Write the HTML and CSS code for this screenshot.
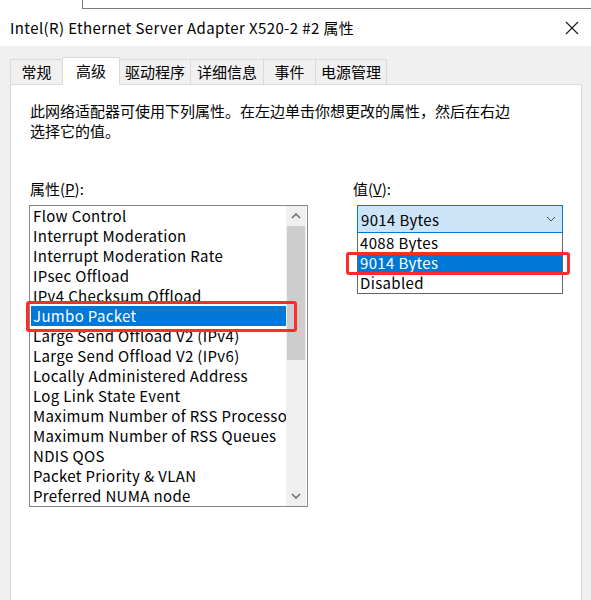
FILE: index.html
```html
<!DOCTYPE html>
<html lang="zh-CN">
<head>
    <meta charset="UTF-8">
    <title>Intel(R) Ethernet Server Adapter X520-2 #2 属性</title>
    <link rel="stylesheet" href="styles.css">
</head>
<body>
    <div class="behind">
        <div class="behind-left"></div>
        <div class="behind-right"></div>
    </div>

    <div class="titlebar">
        <span class="title">Intel(R) Ethernet Server Adapter X520-2 #2 属性</span>
        <svg class="close" width="14" height="14" viewBox="0 0 14 14">
            <path d="M1 1 L13 13 M13 1 L1 13" stroke="#1a1a1a" stroke-width="1.1" fill="none"/>
        </svg>
    </div>

    <div class="dialog">
        <div class="tabs">
            <div class="tab">常规</div>
            <div class="tab active">高级</div>
            <div class="tab">驱动程序</div>
            <div class="tab">详细信息</div>
            <div class="tab">事件</div>
            <div class="tab">电源管理</div>
        </div>

        <div class="panel">
            <p class="intro">此网络适配器可使用下列属性。在左边单击你想更改的属性，然后在右边<br>选择它的值。</p>

            <div class="columns">
                <div class="col-left">
                    <div class="label">属性(<u>P</u>):</div>
                    <div class="listbox">
                        <div class="items">
                            <div class="item">Flow Control</div>
                            <div class="item">Interrupt Moderation</div>
                            <div class="item">Interrupt Moderation Rate</div>
                            <div class="item">IPsec Offload</div>
                            <div class="item">IPv4 Checksum Offload</div>
                            <div class="item selected">Jumbo Packet</div>
                            <div class="item">Large Send Offload V2 (IPv4)</div>
                            <div class="item">Large Send Offload V2 (IPv6)</div>
                            <div class="item">Locally Administered Address</div>
                            <div class="item">Log Link State Event</div>
                            <div class="item">Maximum Number of RSS Processors</div>
                            <div class="item">Maximum Number of RSS Queues</div>
                            <div class="item">NDIS QOS</div>
                            <div class="item">Packet Priority &amp; VLAN</div>
                            <div class="item">Preferred NUMA node</div>
                        </div>
                        <div class="scrollbar">
                            <div class="arrow">
                                <svg width="10" height="6" viewBox="0 0 10 6"><path d="M1 5 L5 1 L9 5" stroke="#606060" stroke-width="1.3" fill="none"/></svg>
                            </div>
                            <div class="track">
                                <div class="thumb"></div>
                            </div>
                            <div class="arrow">
                                <svg width="10" height="6" viewBox="0 0 10 6"><path d="M1 1 L5 5 L9 1" stroke="#606060" stroke-width="1.3" fill="none"/></svg>
                            </div>
                        </div>
                        <div class="mark mark-list"></div>
                    </div>
                </div>

                <div class="col-right">
                    <div class="label">值(<u>V</u>):</div>
                    <div class="combo">
                        <span>9014 Bytes</span>
                        <svg width="10" height="6" viewBox="0 0 10 6"><path d="M1 1 L5 5 L9 1" stroke="#505050" stroke-width="1" fill="none"/></svg>
                    </div>
                    <div class="dropdown">
                        <div class="option">4088 Bytes</div>
                        <div class="option selected">9014 Bytes</div>
                        <div class="option">Disabled</div>
                        <div class="mark mark-drop"></div>
                    </div>
                </div>
            </div>
        </div>
    </div>
</body>
</html>
```

FILE: styles.css
```css
body {
    margin: 0;
    width: 591px;
    height: 600px;
    overflow: hidden;
    background-color: #f0f0f0;
    font-family: "Noto Sans CJK SC", "Noto Sans", sans-serif;
    color: #000;
}
.behind {
    display: flex;
    height: 9px;
    background-color: white;
}
.behind-left {
    width: 82px;
}
.behind-right {
    flex: 1;
    border-left: 1px solid #7a7a7a;
    border-bottom: 1px solid #7a7a7a;
}
.titlebar {
    display: flex;
    align-items: center;
    justify-content: space-between;
    height: 37px;
    padding: 0 12px 0 10px;
    background-color: white;
}
.title {
    font-size: 15px;
    letter-spacing: 0.4px;
}
.dialog {
    padding: 10px 9px 0 10px;
}
.tabs {
    display: flex;
    align-items: flex-end;
    height: 28px;
    position: relative;
    z-index: 1;
}
.tab {
    min-width: 52px;
    height: 25px;
    line-height: 24px;
    padding: 0 5px;
    font-size: 15px;
    text-align: center;
    border: 1px solid #d9d9d9;
    border-bottom: none;
    border-right: none;
    box-sizing: border-box;
}
.tab:last-child {
    border-right: 1px solid #d9d9d9;
}
.tab.active {
    min-width: 58px;
    height: 28px;
    margin-bottom: -1px;
    line-height: 26px;
    border-right: 1px solid #d9d9d9;
    background-color: white;
}
.tab.active + .tab {
    border-left: none;
}
.tab:nth-child(4) {
    padding: 0 6px;
}
.panel {
    height: 520px;
    background-color: white;
    border: 1px solid #d9d9d9;
    padding: 16px 20px 0 18px;
}
.intro {
    margin: 0 0 0 1px;
    font-size: 15px;
    line-height: 20px;
}
.columns {
    display: flex;
    margin-top: 38px;
}
.label {
    font-size: 15px;
    line-height: 20px;
    margin-bottom: 6px;
}
.col-left {
    width: 279px;
}
.col-left .label {
    margin-left: 1px;
}
.col-right {
    margin-left: 45px;
}
.listbox {
    position: relative;
    display: flex;
    height: 302px;
    margin-top: 1px;
    border: 1px solid #828790;
    box-sizing: border-box;
    padding: 0 1px;
}
.items {
    flex: 1;
    overflow: hidden;
}
.item {
    height: 20px;
    line-height: 20px;
    padding-left: 2px;
    font-size: 15px;
    letter-spacing: 0.35px;
    white-space: nowrap;
}
.item.selected {
    background-color: #0078d7;
    color: white;
}
.scrollbar {
    width: 20px;
    display: flex;
    flex-direction: column;
    background-color: #f0f0f0;
}
.arrow {
    height: 20px;
    display: flex;
    align-items: center;
    justify-content: center;
}
.track {
    flex: 1;
}
.thumb {
    height: 134px;
    margin: 0 1px;
    background-color: #cdcdcd;
}
.combo {
    display: flex;
    align-items: center;
    justify-content: space-between;
    width: 206px;
    height: 28px;
    margin-left: 4px;
    padding: 0 6px 0 3px;
    box-sizing: border-box;
    background-color: #cce4f7;
    border: 1px solid #0078d7;
    font-size: 15px;
    letter-spacing: 0.35px;
}
.dropdown {
    position: relative;
    width: 206px;
    margin-left: 4px;
    box-sizing: border-box;
    border: 1px solid #646464;
    border-top: none;
}
.option {
    height: 20px;
    line-height: 20px;
    padding-left: 2px;
    font-size: 15px;
    letter-spacing: 0.35px;
}
.option.selected {
    background-color: #0078d7;
    color: white;
}
.mark {
    position: absolute;
    border: 3px solid #ff2a2a;
    border-radius: 3px;
    box-sizing: border-box;
}
.mark-list {
    left: -4px;
    top: 95px;
    width: 271px;
    height: 31px;
}
.mark-drop {
    left: -12px;
    top: 19px;
    width: 224px;
    height: 23px;
}
```
